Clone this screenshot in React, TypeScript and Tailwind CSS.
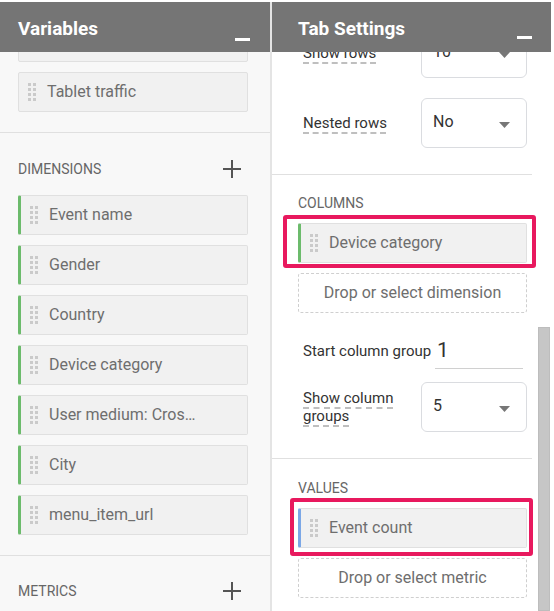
import React from "react";

function Handle() {
  return (
    <div className="grid grid-cols-2 gap-x-[2px] gap-y-[2px] w-[8px] shrink-0">
      {Array.from({ length: 8 }).map((_, i) => (
        <div key={i} className="w-[3px] h-[3px] bg-[#cacaca]" />
      ))}
    </div>
  );
}

function Item({ label, color }: { label: string; color?: "green" | "blue" }) {
  const border =
    color === "green"
      ? "border-l-[3px] border-l-[#6cbb6c] pl-[9px]"
      : color === "blue"
      ? "border-l-[3px] border-l-[#7ba7e6] pl-[9px]"
      : "pl-[9px]";
  return (
    <div
      className={`h-[40px] flex items-center gap-[11px] bg-[#f1f1f1] border border-[#e0e0e0] rounded-[2px] ${border}`}
    >
      <Handle />
      <span className="text-[16px] text-[#6e6e6e] whitespace-nowrap">{label}</span>
    </div>
  );
}

function Minus() {
  return <div className="w-[15px] h-[3px] bg-white" />;
}

function Plus() {
  return (
    <svg width="20" height="20" viewBox="0 0 20 20">
      <path d="M10 1v18M1 10h18" stroke="#555" strokeWidth="2" />
    </svg>
  );
}

function Select({ value }: { value: string }) {
  return (
    <div className="w-[106px] h-[50px] shrink-0 border border-[#dadce0] rounded-[6px] bg-white pl-[11px] pr-[16px] flex items-center justify-between">
      <span className="text-[16px] text-[#333] -mt-[2px]">{value}</span>
      <svg width="11" height="6" viewBox="0 0 11 6" className="mt-[4px]">
        <path d="M0 0h11L5.5 6z" fill="#777" />
      </svg>
    </div>
  );
}

function DropBox({ label }: { label: string }) {
  return (
    <div className="h-[40px] border border-dashed border-[#cfcfcf] rounded-[3px] flex items-center justify-center text-[16px] text-[#6e6e6e]">
      {label}
    </div>
  );
}

function Label({ children }: { children: React.ReactNode }) {
  return (
    <span className="text-[15px] text-[#333] leading-[18px] underline decoration-dashed decoration-[#aaa] underline-offset-[5px]">
      {children}
    </span>
  );
}

export default function App() {
  return (
    <div
      className="w-[554px] h-[611px] overflow-hidden bg-white pt-[2px] flex"
      style={{ fontFamily: "Roboto, 'Liberation Sans', sans-serif" }}
    >
      {/* Left panel */}
      <div className="w-[270px] h-full bg-[#f8f8f8] flex flex-col overflow-hidden">
        <div className="relative z-10 h-[50px] shrink-0 bg-[#757575] flex items-start justify-between pl-[18px] pr-[20px]">
          <span className="text-white font-bold text-[19px] mt-[13px]">Variables</span>
          <div className="mt-[36px]">
            <Minus />
          </div>
        </div>
        <div className="-mt-[30px]">
          <div className="pl-[18px] pr-[22px] pb-[20px] border-b border-[#e0e0e0] flex flex-col gap-[10px]">
            <Item label="" />
            <Item label="Tablet traffic" />
          </div>
          <div className="pl-[18px] pr-[22px] pt-[24px] pb-[20px] border-b border-[#e0e0e0]">
            <div className="h-[24px] flex items-center justify-between mb-[14px]">
              <span className="text-[14px] text-[#666]">DIMENSIONS</span>
              <div className="mr-[6px]">
                <Plus />
              </div>
            </div>
            <div className="flex flex-col gap-[10px]">
              <Item label="Event name" color="green" />
              <Item label="Gender" color="green" />
              <Item label="Country" color="green" />
              <Item label="Device category" color="green" />
              <Item label="User medium: Cros…" color="green" />
              <Item label="City" color="green" />
              <Item label="menu_item_url" color="green" />
            </div>
          </div>
          <div className="pl-[18px] pr-[22px] pt-[23px]">
            <div className="h-[24px] flex items-center justify-between">
              <span className="text-[14px] text-[#666]">METRICS</span>
              <div className="mr-[6px]">
                <Plus />
              </div>
            </div>
          </div>
        </div>
      </div>

      {/* Separator */}
      <div className="w-[2px] h-full bg-[#e4e4e4]" />

      {/* Right panel */}
      <div className="w-[279px] h-full bg-white flex flex-col overflow-hidden relative">
        <div className="relative z-10 h-[50px] shrink-0 bg-[#757575] flex items-start justify-between pl-[26px] pr-[19px]">
          <span className="text-white font-bold text-[19px] mt-[13px]">Tab Settings</span>
          <div className="mt-[34px]">
            <Minus />
          </div>
        </div>

        <div className="w-[260px] -mt-[24px]">
          {/* rows settings */}
          <div className="pl-[31px] pr-[5px] pb-[26px] border-b border-[#e0e0e0]">
            <div className="h-[50px] flex items-center">
              <div className="w-[118px]">
                <Label>Show rows</Label>
              </div>
              <Select value="10" />
            </div>
            <div className="h-[50px] flex items-center mt-[20px]">
              <div className="w-[118px]">
                <Label>Nested rows</Label>
              </div>
              <Select value="No" />
            </div>
          </div>

          {/* Columns */}
          <div className="pl-[26px] pr-[5px] pt-[20px] pb-[26px] border-b border-[#e0e0e0]">
            <div className="text-[14px] leading-[16px] text-[#666] mb-[12px]">COLUMNS</div>
            <div className="relative">
              <div className="absolute -left-[15px] -right-[9px] -top-[8px] -bottom-[5px] border-[4px] border-[#e8195e] rounded-[3px]" />
              <Item label="Device category" color="green" />
            </div>
            <div className="mt-[10px]">
              <DropBox label="Drop or select dimension" />
            </div>
            <div className="mt-[20px] pl-[5px] h-[36px] flex items-center">
              <span className="w-[132px] text-[15px] text-[#333] whitespace-nowrap">Start column group</span>
              <div className="w-[88px] h-[36px] border-b border-[#d0d0d0] flex items-center pl-[2px] text-[21px] text-[#333]">
                1
              </div>
            </div>
            <div className="mt-[13px] pl-[5px] h-[50px] flex items-center">
              <div className="w-[118px] leading-[18px]">
                <Label>Show column groups</Label>
              </div>
              <Select value="5" />
            </div>
          </div>

          {/* Values */}
          <div className="pl-[26px] pr-[5px] pt-[21px]">
            <div className="text-[14px] leading-[16px] text-[#666] mb-[12px]">VALUES</div>
            <div className="relative">
              <div className="absolute -left-[8px] -right-[6px] -top-[10px] -bottom-[8px] border-[4px] border-[#e8195e] rounded-[3px]" />
              <Item label="Event count" color="blue" />
            </div>
            <div className="mt-[10px]">
              <DropBox label="Drop or select metric" />
            </div>
          </div>
        </div>

        {/* scrollbar */}
        <div className="absolute left-[266px] top-[325px] w-[12px] bottom-0 bg-[#c6c6c6] border border-[#bdbdbd]" />
      </div>
    </div>
  );
}
